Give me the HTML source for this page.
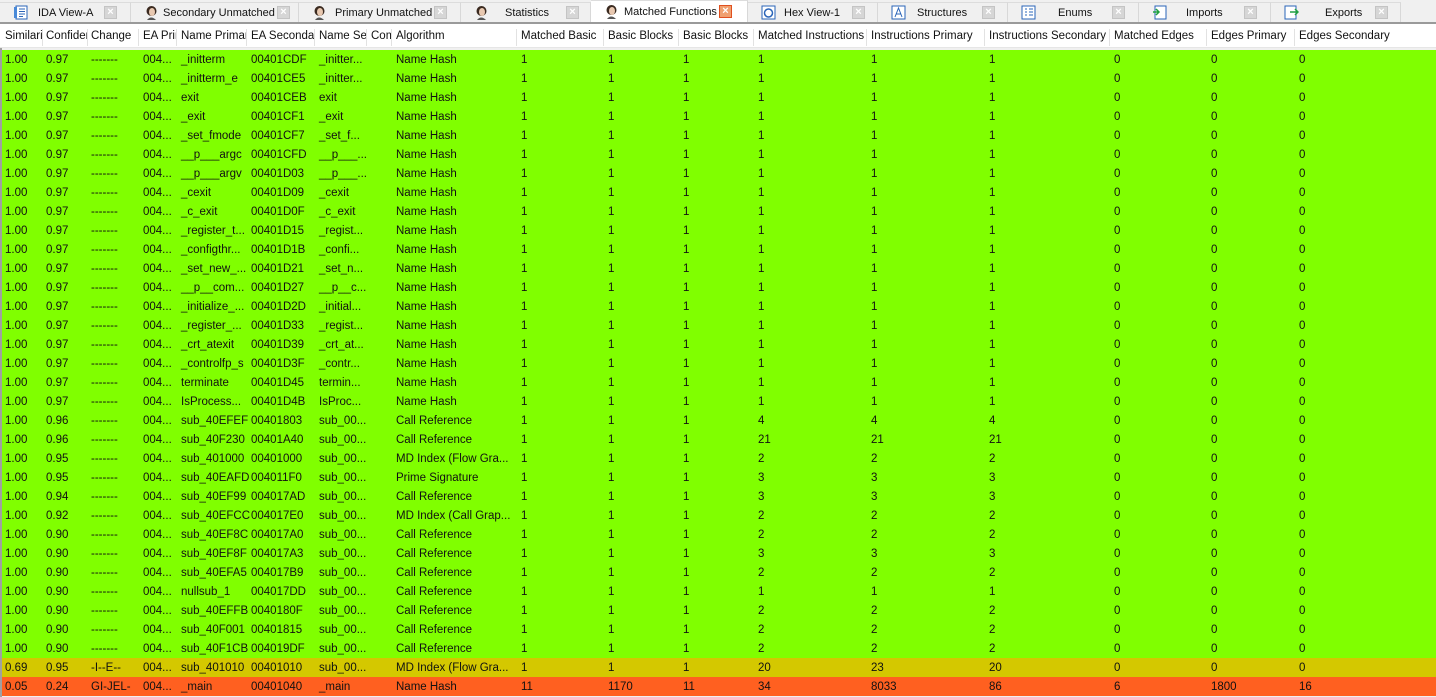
<!DOCTYPE html>
<html><head><meta charset="utf-8"><style>
*{margin:0;padding:0;box-sizing:border-box}
body{width:1436px;height:697px;overflow:hidden;background:#f0f0f0;font-family:"Liberation Sans",sans-serif;font-size:11.5px;color:#111;position:relative}
.tabs{position:absolute;left:0;top:0;width:1436px;height:22px;background:#f0f0f0;font-size:11px}
.tab{position:absolute;top:2px;height:20px;border-right:1px solid #d8d8d8;border-top:1px solid #dcdcdc;background:#f0f0f0}
.tab.act{background:#fff;top:0;height:23px}
.tab .ic{position:absolute;left:13px;top:2px;width:15px;height:15px}
.tab .t{position:absolute;top:4px;white-space:nowrap}
.tab .x{position:absolute;top:3px;width:13px;height:13px;background:#d6d6d6;border:1px solid #c4c4c4;color:#fff;font-size:11px;line-height:11px;text-align:center;font-weight:bold}
.tab.act .x{background:#f0a070;border-color:#e05020}
.line{position:absolute;left:0;top:22px;width:1436px;height:2px;background:#9a9a9a}
.hdr{position:absolute;left:0;top:24px;width:1436px;height:24px;background:#fff;border-bottom:1px solid #e6e6e6}
.hdr span{position:absolute;top:5px;padding-top:1px;white-space:nowrap;overflow:hidden;height:17px;border-right:1px solid #e2e2e2}
.grid{position:absolute;left:2px;top:50px;width:1434px}
.r{height:19px;position:relative;background:#80ff00}
.r.y{background:#d4c800}.r.o{background:#ff6020}
.r span{position:absolute;top:4px;white-space:nowrap}
.c1{left:3px}.c2{left:44px}.c3{left:89px}.c4{left:141px}.c5{left:179px}.c6{left:249px}.c7{left:317px}.c8{left:369px}.c9{left:394px}.c10{left:519px}.c11{left:606px}.c12{left:681px}.c13{left:756px}.c14{left:869px}.c15{left:987px}.c16{left:1112px}.c17{left:1209px}.c18{left:1297px}
.lb{position:absolute;left:0;top:48px;width:2px;height:649px;background:#a0a0a0}
</style></head><body>
<div class="tabs">
<div class="tab" style="left:0;width:131px"><svg class="ic" viewBox="0 0 15 15"><rect x="3" y="1" width="11" height="13" fill="#fff" stroke="#2a64b8"/><rect x="1" y="2" width="3" height="11" fill="#4a8ad8"/><path d="M6 4h6M6 6.5h6M6 9h6M6 11.5h4" stroke="#2a64b8"/></svg><span class="t" style="left:38px">IDA View-A</span><span class="x" style="left:104px">×</span></div>
<div class="tab" style="left:131px;width:168px"><svg class="ic" viewBox="0 0 15 15"><circle cx="7.5" cy="6" r="5" fill="#3a2a20"/><ellipse cx="8" cy="7" rx="3" ry="4" fill="#e8c8b0"/><path d="M3 15q4-5 9 0" fill="#555"/></svg><span class="t" style="left:32px">Secondary Unmatched</span><span class="x" style="left:146px">×</span></div>
<div class="tab" style="left:299px;width:162px"><svg class="ic" viewBox="0 0 15 15"><circle cx="7.5" cy="6" r="5" fill="#3a2a20"/><ellipse cx="8" cy="7" rx="3" ry="4" fill="#e8c8b0"/><path d="M3 15q4-5 9 0" fill="#555"/></svg><span class="t" style="left:36px">Primary Unmatched</span><span class="x" style="left:135px">×</span></div>
<div class="tab" style="left:461px;width:130px"><svg class="ic" viewBox="0 0 15 15"><circle cx="7.5" cy="6" r="5" fill="#3a2a20"/><ellipse cx="8" cy="7" rx="3" ry="4" fill="#e8c8b0"/><path d="M3 15q4-5 9 0" fill="#555"/></svg><span class="t" style="left:44px">Statistics</span><span class="x" style="left:105px">×</span></div>
<div class="tab act" style="left:591px;width:157px"><svg class="ic" viewBox="0 0 15 15" style="top:3px"><circle cx="7.5" cy="6" r="5" fill="#3a2a20"/><ellipse cx="8" cy="7" rx="3" ry="4" fill="#e8c8b0"/><path d="M3 15q4-5 9 0" fill="#555"/></svg><span class="t" style="left:33px;top:5px">Matched Functions</span><span class="x" style="left:128px;top:4px">×</span></div>
<div class="tab" style="left:748px;width:130px"><svg class="ic" viewBox="0 0 15 15"><rect x="1" y="1" width="13" height="13" fill="#fff" stroke="#2a64b8"/><circle cx="7.5" cy="8" r="4" fill="none" stroke="#2a64b8" stroke-width="1.5"/></svg><span class="t" style="left:36px">Hex View-1</span><span class="x" style="left:104px">×</span></div>
<div class="tab" style="left:878px;width:130px"><svg class="ic" viewBox="0 0 15 15"><rect x="1" y="1" width="13" height="13" fill="#fff" stroke="#2a64b8"/><path d="M4 12l3.5-9 3.5 9M5.5 9h4" stroke="#2a64b8" fill="none"/></svg><span class="t" style="left:39px">Structures</span><span class="x" style="left:104px">×</span></div>
<div class="tab" style="left:1008px;width:131px"><svg class="ic" viewBox="0 0 15 15"><rect x="1" y="1" width="13" height="13" fill="#fff" stroke="#2a64b8"/><path d="M4 4h2M4 7h2M4 10h2M8 4h4M8 7h4M8 10h4" stroke="#2a64b8"/></svg><span class="t" style="left:50px">Enums</span><span class="x" style="left:104px">×</span></div>
<div class="tab" style="left:1139px;width:132px"><svg class="ic" viewBox="0 0 15 15"><rect x="3" y="1" width="11" height="13" fill="#fff" stroke="#2a64b8"/><path d="M1 7h6M4 4l3 3-3 3" stroke="#20a040" fill="none" stroke-width="1.5"/></svg><span class="t" style="left:47px">Imports</span><span class="x" style="left:105px">×</span></div>
<div class="tab" style="left:1271px;width:130px"><svg class="ic" viewBox="0 0 15 15"><rect x="1" y="1" width="11" height="13" fill="#fff" stroke="#2a64b8"/><path d="M6 7h8M11 4l3 3-3 3" stroke="#20a040" fill="none" stroke-width="1.5"/></svg><span class="t" style="left:54px">Exports</span><span class="x" style="left:104px">×</span></div>
</div>
<div class="line"></div>
<div class="hdr">
<span style="left:0;width:43px;padding-left:5px">Similarity</span>
<span style="left:43px;width:45px;padding-left:3px">Confidence</span>
<span style="left:88px;width:51px;padding-left:3px">Change</span>
<span style="left:139px;width:38px;padding-left:4px">EA Primary</span>
<span style="left:177px;width:70px;padding-left:4px">Name Primary</span>
<span style="left:247px;width:68px;padding-left:4px">EA Secondary</span>
<span style="left:315px;width:52px;padding-left:4px">Name Secondary</span>
<span style="left:367px;width:25px;padding-left:4px">Comment</span>
<span style="left:392px;width:125px;padding-left:4px">Algorithm</span>
<span style="left:517px;width:87px;padding-left:4px">Matched Basic</span>
<span style="left:604px;width:75px;padding-left:4px">Basic Blocks</span>
<span style="left:679px;width:75px;padding-left:4px">Basic Blocks</span>
<span style="left:754px;width:113px;padding-left:4px">Matched Instructions</span>
<span style="left:867px;width:118px;padding-left:4px">Instructions Primary</span>
<span style="left:985px;width:125px;padding-left:4px">Instructions Secondary</span>
<span style="left:1110px;width:97px;padding-left:4px">Matched Edges</span>
<span style="left:1207px;width:88px;padding-left:4px">Edges Primary</span>
<span style="left:1295px;width:141px;padding-left:4px;border:0">Edges Secondary</span>
</div>
<div class="lb"></div>
<div class="grid">
<div class="r"><span class="c1">1.00</span><span class="c2">0.97</span><span class="c3">-------</span><span class="c4">004...</span><span class="c5">_initterm</span><span class="c6">00401CDF</span><span class="c7">_initter...</span><span class="c9">Name Hash</span><span class="c10">1</span><span class="c11">1</span><span class="c12">1</span><span class="c13">1</span><span class="c14">1</span><span class="c15">1</span><span class="c16">0</span><span class="c17">0</span><span class="c18">0</span></div>
<div class="r"><span class="c1">1.00</span><span class="c2">0.97</span><span class="c3">-------</span><span class="c4">004...</span><span class="c5">_initterm_e</span><span class="c6">00401CE5</span><span class="c7">_initter...</span><span class="c9">Name Hash</span><span class="c10">1</span><span class="c11">1</span><span class="c12">1</span><span class="c13">1</span><span class="c14">1</span><span class="c15">1</span><span class="c16">0</span><span class="c17">0</span><span class="c18">0</span></div>
<div class="r"><span class="c1">1.00</span><span class="c2">0.97</span><span class="c3">-------</span><span class="c4">004...</span><span class="c5">exit</span><span class="c6">00401CEB</span><span class="c7">exit</span><span class="c9">Name Hash</span><span class="c10">1</span><span class="c11">1</span><span class="c12">1</span><span class="c13">1</span><span class="c14">1</span><span class="c15">1</span><span class="c16">0</span><span class="c17">0</span><span class="c18">0</span></div>
<div class="r"><span class="c1">1.00</span><span class="c2">0.97</span><span class="c3">-------</span><span class="c4">004...</span><span class="c5">_exit</span><span class="c6">00401CF1</span><span class="c7">_exit</span><span class="c9">Name Hash</span><span class="c10">1</span><span class="c11">1</span><span class="c12">1</span><span class="c13">1</span><span class="c14">1</span><span class="c15">1</span><span class="c16">0</span><span class="c17">0</span><span class="c18">0</span></div>
<div class="r"><span class="c1">1.00</span><span class="c2">0.97</span><span class="c3">-------</span><span class="c4">004...</span><span class="c5">_set_fmode</span><span class="c6">00401CF7</span><span class="c7">_set_f...</span><span class="c9">Name Hash</span><span class="c10">1</span><span class="c11">1</span><span class="c12">1</span><span class="c13">1</span><span class="c14">1</span><span class="c15">1</span><span class="c16">0</span><span class="c17">0</span><span class="c18">0</span></div>
<div class="r"><span class="c1">1.00</span><span class="c2">0.97</span><span class="c3">-------</span><span class="c4">004...</span><span class="c5">__p___argc</span><span class="c6">00401CFD</span><span class="c7">__p___...</span><span class="c9">Name Hash</span><span class="c10">1</span><span class="c11">1</span><span class="c12">1</span><span class="c13">1</span><span class="c14">1</span><span class="c15">1</span><span class="c16">0</span><span class="c17">0</span><span class="c18">0</span></div>
<div class="r"><span class="c1">1.00</span><span class="c2">0.97</span><span class="c3">-------</span><span class="c4">004...</span><span class="c5">__p___argv</span><span class="c6">00401D03</span><span class="c7">__p___...</span><span class="c9">Name Hash</span><span class="c10">1</span><span class="c11">1</span><span class="c12">1</span><span class="c13">1</span><span class="c14">1</span><span class="c15">1</span><span class="c16">0</span><span class="c17">0</span><span class="c18">0</span></div>
<div class="r"><span class="c1">1.00</span><span class="c2">0.97</span><span class="c3">-------</span><span class="c4">004...</span><span class="c5">_cexit</span><span class="c6">00401D09</span><span class="c7">_cexit</span><span class="c9">Name Hash</span><span class="c10">1</span><span class="c11">1</span><span class="c12">1</span><span class="c13">1</span><span class="c14">1</span><span class="c15">1</span><span class="c16">0</span><span class="c17">0</span><span class="c18">0</span></div>
<div class="r"><span class="c1">1.00</span><span class="c2">0.97</span><span class="c3">-------</span><span class="c4">004...</span><span class="c5">_c_exit</span><span class="c6">00401D0F</span><span class="c7">_c_exit</span><span class="c9">Name Hash</span><span class="c10">1</span><span class="c11">1</span><span class="c12">1</span><span class="c13">1</span><span class="c14">1</span><span class="c15">1</span><span class="c16">0</span><span class="c17">0</span><span class="c18">0</span></div>
<div class="r"><span class="c1">1.00</span><span class="c2">0.97</span><span class="c3">-------</span><span class="c4">004...</span><span class="c5">_register_t...</span><span class="c6">00401D15</span><span class="c7">_regist...</span><span class="c9">Name Hash</span><span class="c10">1</span><span class="c11">1</span><span class="c12">1</span><span class="c13">1</span><span class="c14">1</span><span class="c15">1</span><span class="c16">0</span><span class="c17">0</span><span class="c18">0</span></div>
<div class="r"><span class="c1">1.00</span><span class="c2">0.97</span><span class="c3">-------</span><span class="c4">004...</span><span class="c5">_configthr...</span><span class="c6">00401D1B</span><span class="c7">_confi...</span><span class="c9">Name Hash</span><span class="c10">1</span><span class="c11">1</span><span class="c12">1</span><span class="c13">1</span><span class="c14">1</span><span class="c15">1</span><span class="c16">0</span><span class="c17">0</span><span class="c18">0</span></div>
<div class="r"><span class="c1">1.00</span><span class="c2">0.97</span><span class="c3">-------</span><span class="c4">004...</span><span class="c5">_set_new_...</span><span class="c6">00401D21</span><span class="c7">_set_n...</span><span class="c9">Name Hash</span><span class="c10">1</span><span class="c11">1</span><span class="c12">1</span><span class="c13">1</span><span class="c14">1</span><span class="c15">1</span><span class="c16">0</span><span class="c17">0</span><span class="c18">0</span></div>
<div class="r"><span class="c1">1.00</span><span class="c2">0.97</span><span class="c3">-------</span><span class="c4">004...</span><span class="c5">__p__com...</span><span class="c6">00401D27</span><span class="c7">__p__c...</span><span class="c9">Name Hash</span><span class="c10">1</span><span class="c11">1</span><span class="c12">1</span><span class="c13">1</span><span class="c14">1</span><span class="c15">1</span><span class="c16">0</span><span class="c17">0</span><span class="c18">0</span></div>
<div class="r"><span class="c1">1.00</span><span class="c2">0.97</span><span class="c3">-------</span><span class="c4">004...</span><span class="c5">_initialize_...</span><span class="c6">00401D2D</span><span class="c7">_initial...</span><span class="c9">Name Hash</span><span class="c10">1</span><span class="c11">1</span><span class="c12">1</span><span class="c13">1</span><span class="c14">1</span><span class="c15">1</span><span class="c16">0</span><span class="c17">0</span><span class="c18">0</span></div>
<div class="r"><span class="c1">1.00</span><span class="c2">0.97</span><span class="c3">-------</span><span class="c4">004...</span><span class="c5">_register_...</span><span class="c6">00401D33</span><span class="c7">_regist...</span><span class="c9">Name Hash</span><span class="c10">1</span><span class="c11">1</span><span class="c12">1</span><span class="c13">1</span><span class="c14">1</span><span class="c15">1</span><span class="c16">0</span><span class="c17">0</span><span class="c18">0</span></div>
<div class="r"><span class="c1">1.00</span><span class="c2">0.97</span><span class="c3">-------</span><span class="c4">004...</span><span class="c5">_crt_atexit</span><span class="c6">00401D39</span><span class="c7">_crt_at...</span><span class="c9">Name Hash</span><span class="c10">1</span><span class="c11">1</span><span class="c12">1</span><span class="c13">1</span><span class="c14">1</span><span class="c15">1</span><span class="c16">0</span><span class="c17">0</span><span class="c18">0</span></div>
<div class="r"><span class="c1">1.00</span><span class="c2">0.97</span><span class="c3">-------</span><span class="c4">004...</span><span class="c5">_controlfp_s</span><span class="c6">00401D3F</span><span class="c7">_contr...</span><span class="c9">Name Hash</span><span class="c10">1</span><span class="c11">1</span><span class="c12">1</span><span class="c13">1</span><span class="c14">1</span><span class="c15">1</span><span class="c16">0</span><span class="c17">0</span><span class="c18">0</span></div>
<div class="r"><span class="c1">1.00</span><span class="c2">0.97</span><span class="c3">-------</span><span class="c4">004...</span><span class="c5">terminate</span><span class="c6">00401D45</span><span class="c7">termin...</span><span class="c9">Name Hash</span><span class="c10">1</span><span class="c11">1</span><span class="c12">1</span><span class="c13">1</span><span class="c14">1</span><span class="c15">1</span><span class="c16">0</span><span class="c17">0</span><span class="c18">0</span></div>
<div class="r"><span class="c1">1.00</span><span class="c2">0.97</span><span class="c3">-------</span><span class="c4">004...</span><span class="c5">IsProcess...</span><span class="c6">00401D4B</span><span class="c7">IsProc...</span><span class="c9">Name Hash</span><span class="c10">1</span><span class="c11">1</span><span class="c12">1</span><span class="c13">1</span><span class="c14">1</span><span class="c15">1</span><span class="c16">0</span><span class="c17">0</span><span class="c18">0</span></div>
<div class="r"><span class="c1">1.00</span><span class="c2">0.96</span><span class="c3">-------</span><span class="c4">004...</span><span class="c5">sub_40EFEF</span><span class="c6">00401803</span><span class="c7">sub_00...</span><span class="c9">Call Reference</span><span class="c10">1</span><span class="c11">1</span><span class="c12">1</span><span class="c13">4</span><span class="c14">4</span><span class="c15">4</span><span class="c16">0</span><span class="c17">0</span><span class="c18">0</span></div>
<div class="r"><span class="c1">1.00</span><span class="c2">0.96</span><span class="c3">-------</span><span class="c4">004...</span><span class="c5">sub_40F230</span><span class="c6">00401A40</span><span class="c7">sub_00...</span><span class="c9">Call Reference</span><span class="c10">1</span><span class="c11">1</span><span class="c12">1</span><span class="c13">21</span><span class="c14">21</span><span class="c15">21</span><span class="c16">0</span><span class="c17">0</span><span class="c18">0</span></div>
<div class="r"><span class="c1">1.00</span><span class="c2">0.95</span><span class="c3">-------</span><span class="c4">004...</span><span class="c5">sub_401000</span><span class="c6">00401000</span><span class="c7">sub_00...</span><span class="c9">MD Index (Flow Gra...</span><span class="c10">1</span><span class="c11">1</span><span class="c12">1</span><span class="c13">2</span><span class="c14">2</span><span class="c15">2</span><span class="c16">0</span><span class="c17">0</span><span class="c18">0</span></div>
<div class="r"><span class="c1">1.00</span><span class="c2">0.95</span><span class="c3">-------</span><span class="c4">004...</span><span class="c5">sub_40EAFD</span><span class="c6">004011F0</span><span class="c7">sub_00...</span><span class="c9">Prime Signature</span><span class="c10">1</span><span class="c11">1</span><span class="c12">1</span><span class="c13">3</span><span class="c14">3</span><span class="c15">3</span><span class="c16">0</span><span class="c17">0</span><span class="c18">0</span></div>
<div class="r"><span class="c1">1.00</span><span class="c2">0.94</span><span class="c3">-------</span><span class="c4">004...</span><span class="c5">sub_40EF99</span><span class="c6">004017AD</span><span class="c7">sub_00...</span><span class="c9">Call Reference</span><span class="c10">1</span><span class="c11">1</span><span class="c12">1</span><span class="c13">3</span><span class="c14">3</span><span class="c15">3</span><span class="c16">0</span><span class="c17">0</span><span class="c18">0</span></div>
<div class="r"><span class="c1">1.00</span><span class="c2">0.92</span><span class="c3">-------</span><span class="c4">004...</span><span class="c5">sub_40EFCC</span><span class="c6">004017E0</span><span class="c7">sub_00...</span><span class="c9">MD Index (Call Grap...</span><span class="c10">1</span><span class="c11">1</span><span class="c12">1</span><span class="c13">2</span><span class="c14">2</span><span class="c15">2</span><span class="c16">0</span><span class="c17">0</span><span class="c18">0</span></div>
<div class="r"><span class="c1">1.00</span><span class="c2">0.90</span><span class="c3">-------</span><span class="c4">004...</span><span class="c5">sub_40EF8C</span><span class="c6">004017A0</span><span class="c7">sub_00...</span><span class="c9">Call Reference</span><span class="c10">1</span><span class="c11">1</span><span class="c12">1</span><span class="c13">2</span><span class="c14">2</span><span class="c15">2</span><span class="c16">0</span><span class="c17">0</span><span class="c18">0</span></div>
<div class="r"><span class="c1">1.00</span><span class="c2">0.90</span><span class="c3">-------</span><span class="c4">004...</span><span class="c5">sub_40EF8F</span><span class="c6">004017A3</span><span class="c7">sub_00...</span><span class="c9">Call Reference</span><span class="c10">1</span><span class="c11">1</span><span class="c12">1</span><span class="c13">3</span><span class="c14">3</span><span class="c15">3</span><span class="c16">0</span><span class="c17">0</span><span class="c18">0</span></div>
<div class="r"><span class="c1">1.00</span><span class="c2">0.90</span><span class="c3">-------</span><span class="c4">004...</span><span class="c5">sub_40EFA5</span><span class="c6">004017B9</span><span class="c7">sub_00...</span><span class="c9">Call Reference</span><span class="c10">1</span><span class="c11">1</span><span class="c12">1</span><span class="c13">2</span><span class="c14">2</span><span class="c15">2</span><span class="c16">0</span><span class="c17">0</span><span class="c18">0</span></div>
<div class="r"><span class="c1">1.00</span><span class="c2">0.90</span><span class="c3">-------</span><span class="c4">004...</span><span class="c5">nullsub_1</span><span class="c6">004017DD</span><span class="c7">sub_00...</span><span class="c9">Call Reference</span><span class="c10">1</span><span class="c11">1</span><span class="c12">1</span><span class="c13">1</span><span class="c14">1</span><span class="c15">1</span><span class="c16">0</span><span class="c17">0</span><span class="c18">0</span></div>
<div class="r"><span class="c1">1.00</span><span class="c2">0.90</span><span class="c3">-------</span><span class="c4">004...</span><span class="c5">sub_40EFFB</span><span class="c6">0040180F</span><span class="c7">sub_00...</span><span class="c9">Call Reference</span><span class="c10">1</span><span class="c11">1</span><span class="c12">1</span><span class="c13">2</span><span class="c14">2</span><span class="c15">2</span><span class="c16">0</span><span class="c17">0</span><span class="c18">0</span></div>
<div class="r"><span class="c1">1.00</span><span class="c2">0.90</span><span class="c3">-------</span><span class="c4">004...</span><span class="c5">sub_40F001</span><span class="c6">00401815</span><span class="c7">sub_00...</span><span class="c9">Call Reference</span><span class="c10">1</span><span class="c11">1</span><span class="c12">1</span><span class="c13">2</span><span class="c14">2</span><span class="c15">2</span><span class="c16">0</span><span class="c17">0</span><span class="c18">0</span></div>
<div class="r"><span class="c1">1.00</span><span class="c2">0.90</span><span class="c3">-------</span><span class="c4">004...</span><span class="c5">sub_40F1CB</span><span class="c6">004019DF</span><span class="c7">sub_00...</span><span class="c9">Call Reference</span><span class="c10">1</span><span class="c11">1</span><span class="c12">1</span><span class="c13">2</span><span class="c14">2</span><span class="c15">2</span><span class="c16">0</span><span class="c17">0</span><span class="c18">0</span></div>
<div class="r y"><span class="c1">0.69</span><span class="c2">0.95</span><span class="c3">-I--E--</span><span class="c4">004...</span><span class="c5">sub_401010</span><span class="c6">00401010</span><span class="c7">sub_00...</span><span class="c9">MD Index (Flow Gra...</span><span class="c10">1</span><span class="c11">1</span><span class="c12">1</span><span class="c13">20</span><span class="c14">23</span><span class="c15">20</span><span class="c16">0</span><span class="c17">0</span><span class="c18">0</span></div>
<div class="r o"><span class="c1">0.05</span><span class="c2">0.24</span><span class="c3">GI-JEL-</span><span class="c4">004...</span><span class="c5">_main</span><span class="c6">00401040</span><span class="c7">_main</span><span class="c9">Name Hash</span><span class="c10">11</span><span class="c11">1170</span><span class="c12">11</span><span class="c13">34</span><span class="c14">8033</span><span class="c15">86</span><span class="c16">6</span><span class="c17">1800</span><span class="c18">16</span></div>
</div>
</body></html>
